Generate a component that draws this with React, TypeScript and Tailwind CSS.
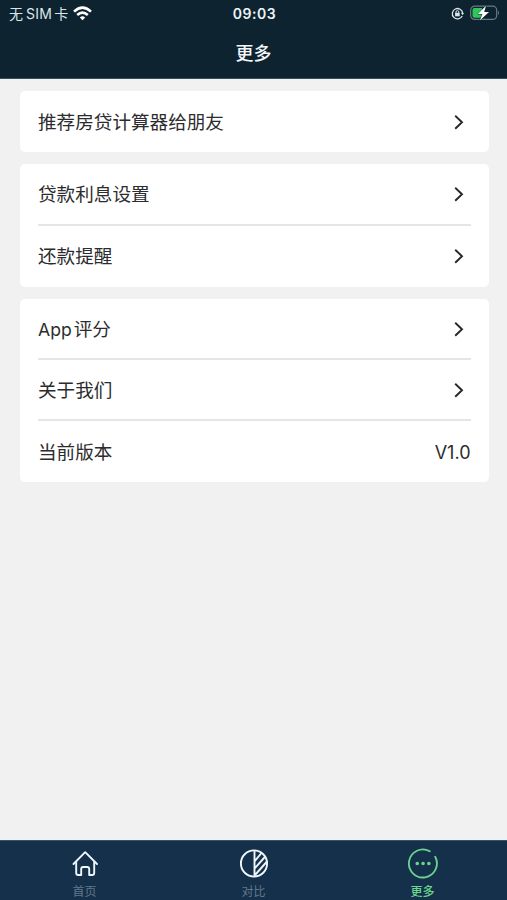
import React from 'react';

interface MenuItem {
  label: React.ReactNode;
  value?: string;
}

// Settings rows, grouped by card
const groups: MenuItem[][] = [
  [{ label: '推荐房贷计算器给朋友' }],
  [{ label: '贷款利息设置' }, { label: '还款提醒' }],
  [
    { label: <><span className="mr-[2px] text-[17.6px]">App</span>评分</> },
    { label: '关于我们' },
    { label: '当前版本', value: 'V1.0' },
  ],
];

function Chevron() {
  return (
    <svg className="mr-[6.5px] h-4 w-[10px]" viewBox="0 0 10 16" fill="none" stroke="#27272a" strokeWidth="1.9">
      <path d="M1.2 1.7 8 8.2 1.2 14.7" />
    </svg>
  );
}

function StatusBar() {
  return (
    <div className="grid h-7 grid-cols-3 items-center pl-[9px] pr-[7px] text-white">
      <div className="flex items-center pb-[2px] text-[14px] text-[#dce5ea]">
        <span>无</span>
        <span className="ml-[3px] mr-[2px] tracking-[0.3px]">SIM</span>
        <span>卡</span>
        <svg className="ml-[5px] h-[15px] w-[19px]" viewBox="0 0 19 15" fill="none" stroke="#fff" strokeWidth="2.6">
          <path d="M1 5.6Q9.5-2.3 18 5.6" />
          <path d="M4.2 9Q9.5 4.1 14.8 9" />
          <path d="M9.5 14.2 6.8 11.4Q9.5 9 12.2 11.4Z" fill="#fff" stroke="none" />
        </svg>
      </div>
      <div className="pb-[2px] text-center text-[14px] font-semibold tracking-[0.55px] text-[#eef3f6]">09:03</div>
      <div className="flex items-center justify-end gap-[6px] pb-[2px]">
        {/* Rotation lock */}
        <svg className="h-[13px] w-[13px]" viewBox="0 0 13 13" fill="none" stroke="#dce5ea">
          <path d="M11.2 9A5.2 5.2 0 1 1 11.7 6.2" strokeWidth="1.3" />
          <path d="m10 5.8 3 .2-1.5 2.2Z" fill="#dce5ea" stroke="none" />
          <rect x="4.1" y="5.8" width="4.6" height="3.5" fill="#dce5ea" stroke="none" />
          <path d="M5 6V5a1.4 1.4 0 0 1 2.8 0v1" />
        </svg>
        {/* Battery */}
        <svg className="h-4 w-[30px]" viewBox="0 0 30 16">
          <rect x=".7" y="1.2" width="26" height="13.2" rx="4" fill="none" stroke="#697b85" strokeWidth="1.2" />
          <path d="M28 5.5q2 2.3 0 4.7Z" fill="#697b85" />
          <path d="M4.5 3H12v9.7H4.5A2 2 0 0 1 2.5 11V5a2 2 0 0 1 2-2Z" fill="#30c759" />
          <path d="M16 .8 7.8 9h4.6L9.8 15.4 19 6.9h-4.8Z" fill="#fff" stroke="#0d2330" strokeWidth="1" paintOrder="stroke" />
        </svg>
      </div>
    </div>
  );
}

function HomeIcon() {
  return (
    <svg className="h-8 w-8" viewBox="0 0 32 32" fill="none" stroke="#f0f6fa" strokeWidth="1.9" strokeLinejoin="round" strokeLinecap="round">
      <path d="M4.5 17 16.2 5.2 28 17" />
      <path d="M7.2 15V26q0 2 2 2h3v-6q0-2 2-2h4q2 0 2 2v6h3q2 0 2-2V15" />
    </svg>
  );
}

function CompareIcon() {
  return (
    <svg className="h-8 w-8" viewBox="0 0 32 32" fill="none" stroke="#f0f6fa" strokeWidth="1.9">
      <circle cx="16" cy="16.5" r="13.1" />
      <path d="M16.5 3.5v26M16.5 14.5 23.5 6M16.5 21.5 27.3 9.5M17 28 29 14.5" />
    </svg>
  );
}

function MoreIcon() {
  return (
    <svg className="h-8 w-8" viewBox="0 0 32 32" fill="none" stroke="#6bd58d" strokeWidth="1.8" strokeLinecap="round">
      <path d="M22.8 4.3A14 14 0 1 0 28.2 9.8" />
      <path d="M10.2 16.5h.1M16 16.5h.1M21.8 16.5h.1" strokeWidth="3.5" />
    </svg>
  );
}

const tabs = [
  { label: '首页', icon: <HomeIcon />, color: 'text-[#62788b]' },
  { label: '对比', icon: <CompareIcon />, color: 'text-[#62788b]' },
  { label: '更多', icon: <MoreIcon />, color: 'text-[#6bd58d] font-medium' },
];

export default function App() {
  return (
    <div className="flex h-screen flex-col bg-[#f1f1f1] font-[Inter,'Noto_Sans_CJK_SC',sans-serif] text-[#2c2c2e]">
      {/* Header */}
      <header className="h-[79px] shrink-0 border-b border-[#35505f] bg-[#0d2330]">
        <StatusBar />
        <h1 className="text-center text-[18px] font-medium leading-[52px] text-[#f3f7f9]">更多</h1>
      </header>

      {/* Settings cards */}
      <main className="flex flex-1 flex-col gap-[12.4px] pl-5 pr-[18.5px] pt-3">
        {groups.map((items, index) => (
          <section key={index} className="rounded-[5px] bg-white px-[18px]">
            {items.map((item, row) => (
              <div
                key={row}
                className={`flex h-[61.1px] items-center justify-between text-[18.6px] ${row < items.length - 1 ? 'border-b-2 border-[#e5e5e5]' : ''}`}
              >
                <span className="pt-[2px]">{item.label}</span>
                {item.value ? <span className="pt-px text-[18px]">{item.value}</span> : <Chevron />}
              </div>
            ))}
          </section>
        ))}
      </main>

      {/* Tab bar */}
      <nav className="grid h-[60px] shrink-0 grid-cols-3 border-t border-[#385468] bg-[#14304a]">
        {tabs.map((tab) => (
          <button key={tab.label} className={`flex flex-col items-center pt-[6px] text-[12px] leading-[25px] ${tab.color}`}>
            {tab.icon}
            {tab.label}
          </button>
        ))}
      </nav>
    </div>
  );
}
